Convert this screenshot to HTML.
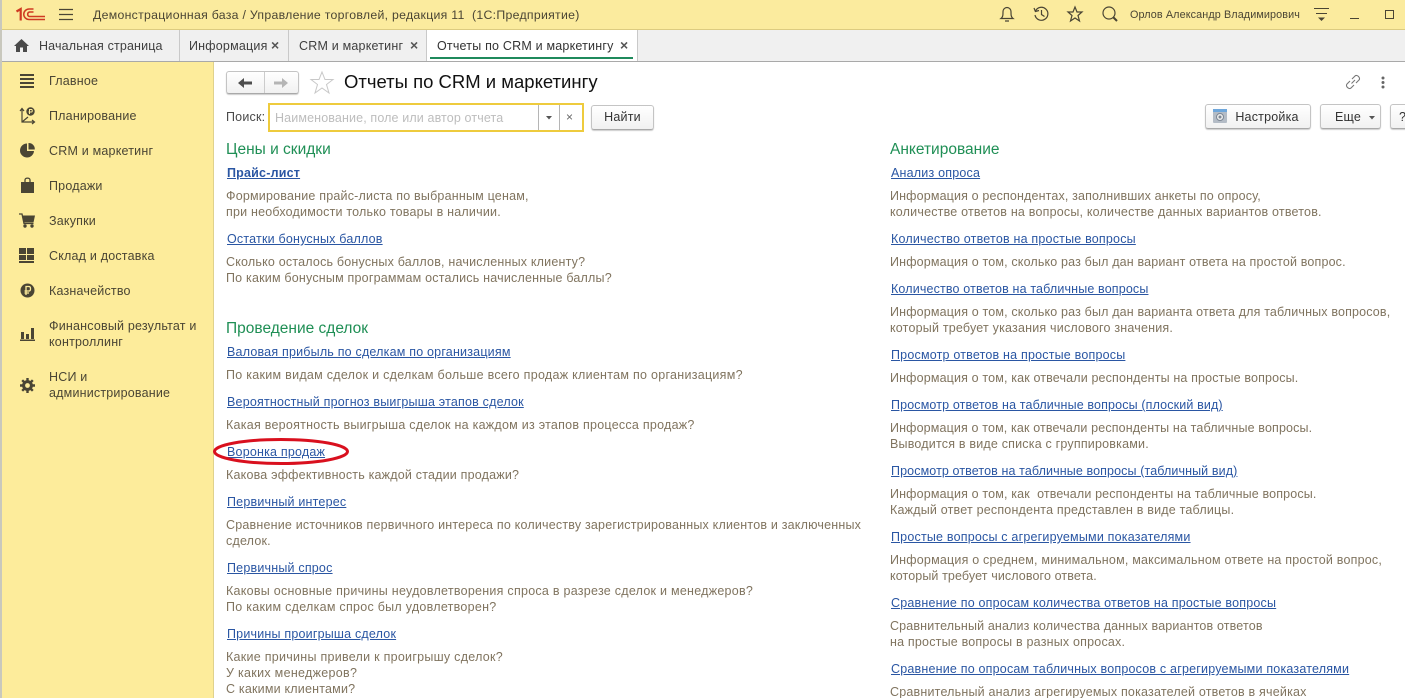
<!DOCTYPE html>
<html lang="ru"><head><meta charset="utf-8"><title>Отчеты по CRM и маркетингу</title>
<style>
html,body{margin:0;padding:0;width:1405px;height:698px;overflow:hidden;background:#fff}
body{position:relative;font-family:"Liberation Sans",Arial,sans-serif;font-size:12.5px;letter-spacing:.2px}
.a{position:absolute;white-space:nowrap;line-height:16px}
.l{position:absolute;white-space:nowrap;line-height:16px;color:#2a56a3;text-decoration:underline;margin-top:1px}
.d{position:absolute;white-space:nowrap;line-height:16px;color:#80745f;margin-top:1px}
.h{position:absolute;white-space:nowrap;line-height:20px;color:#1f8f55;font-size:15.5px;letter-spacing:0;margin-top:1px}
.m{position:absolute;left:49px;white-space:nowrap;line-height:16px;color:#4a4534;margin-top:1px}
.b{position:absolute;box-sizing:border-box;border:1px solid #c4c4c4;border-bottom-color:#a9a9a9;border-radius:3px;background:linear-gradient(#fff,#f1f1f1);box-shadow:0 1px 1px #ccc;color:#333;text-align:center}
.t{position:absolute;top:30px;height:31px;width:1px;background:#c9c9c9}
svg{position:absolute;overflow:visible}
</style></head><body>
<div style="position:absolute;left:0;top:0;width:1405px;height:29px;background:#fbeb9e;border-bottom:1px solid #dccb80"></div>
<div style="position:absolute;left:0;top:30px;width:1405px;height:31px;background:#f0f0f0;border-bottom:1px solid #a9a9a9"></div>
<div style="position:absolute;left:2px;top:62px;width:211px;height:636px;background:#fdec9b;border-right:1px solid #e0d28c"></div>
<div style="position:absolute;left:0;top:0;width:2px;height:698px;background:#c9c8bd"></div>

<svg style="left:16px;top:8px" width="30" height="13" viewBox="0 0 30 13"><path d="M0.500 3.500L4.700 1V12.500" fill="none" stroke="#cf3a22" stroke-width="2.200"/><path d="M17.500 1H13A5.200 5.200 0 0 0 13 11.500H29" fill="none" stroke="#cf3a22" stroke-width="1.500"/><path d="M17.500 4H13.500A2.300 2.300 0 0 0 13.500 8.500H29" fill="none" stroke="#cf3a22" stroke-width="1.500"/></svg>
<svg style="left:59px;top:8px" width="14" height="13"><path d="M0 1.500H14M0 6.500H14M0 11.500H14" stroke="#4a4534" stroke-width="1.200"/></svg>
<div class="a" style="left:93px;top:7px;color:#4a4534;font-size:12.3px;letter-spacing:.28px">Демонстрационная база / Управление торговлей, редакция 11&nbsp; (1С:Предприятие)</div>

<svg style="left:1000px;top:6px" width="14" height="17" viewBox="0 0 14 17"><path d="M1 12.500C3 11 3 9 3 6C3 3 5 1.500 7 1.500S11 3 11 6C11 9 11 11 13 12.500ZM5 15H9" fill="none" stroke="#4a4534" stroke-width="1.200"/></svg>
<svg style="left:1033px;top:6px" width="16" height="16" viewBox="0 0 16 16"><path d="M2.500 5A6.500 6.500 0 1 1 2 9M1 2L2.400 5.500L6 4.500M8.500 4V8.500L11.500 10.500" fill="none" stroke="#4a4534" stroke-width="1.200"/></svg>
<svg style="left:1067px;top:6px" width="16" height="16" viewBox="0 0 16 16"><path d="M8 1L10 6H15L11 9.500L12.500 15L8 12L3.500 15L5 9.500L1 6H6Z" fill="none" stroke="#4a4534" stroke-width="1.200"/></svg>
<svg style="left:1102px;top:6px" width="16" height="16" viewBox="0 0 16 16"><circle cx="7" cy="7" r="6" fill="none" stroke="#4a4534" stroke-width="1.200"/><path d="M11 11L15 15" stroke="#4a4534" stroke-width="2"/></svg>
<div class="a" style="left:1130px;top:7px;color:#4a4534;font-size:10.8px;letter-spacing:.11px">Орлов Александр Владимирович</div>
<svg style="left:1314px;top:8px" width="15" height="14"><path d="M0 .5H15M2 5.500H13" stroke="#4a4534"/><path d="M4 9.500H11L7.500 13Z" fill="#4a4534"/></svg>
<div style="position:absolute;left:1350px;top:18px;width:9px;height:1px;background:#4a4534"></div>
<div style="position:absolute;left:1385px;top:10px;width:7px;height:7px;border:1px solid #4a4534"></div>

<svg style="left:14px;top:39px" width="15" height="13"><path d="M7.500 0L15 7H13V13H9V8.500H6V13H2V7H0Z" fill="#4a4a4a"/></svg>
<div class="a" style="left:39px;top:38px;color:#3f3f3f;letter-spacing:.15px">Начальная страница</div>
<div class="t" style="left:179px"></div>
<div class="a" style="left:189px;top:38px;color:#3f3f3f">Информация</div>
<div class="a" style="left:271px;top:37px;color:#555;font-weight:bold;font-size:14px;letter-spacing:0">×</div>
<div class="t" style="left:288px"></div>
<div class="a" style="left:299px;top:38px;color:#3f3f3f">CRM и маркетинг</div>
<div class="a" style="left:410px;top:37px;color:#555;font-weight:bold;font-size:14px;letter-spacing:0">×</div>
<div class="t" style="left:426px"></div>
<div style="position:absolute;left:427px;top:30px;width:210px;height:31px;background:#fff"></div>
<div class="a" style="left:437px;top:38px;color:#333">Отчеты по CRM и маркетингу</div>
<div class="a" style="left:620px;top:37px;color:#555;font-weight:bold;font-size:14px;letter-spacing:0">×</div>
<div style="position:absolute;left:430px;top:57px;width:203px;height:2px;background:#1f8a5c"></div>
<div class="t" style="left:637px"></div>

<svg style="left:20px;top:74px" width="14" height="14"><path d="M0 1H14M0 5H14M0 9H14M0 13H14" stroke="#4a4534" stroke-width="2"/></svg>
<div class="m" style="top:72px">Главное</div>
<svg style="left:19px;top:107px" width="16" height="17" viewBox="0 0 16 17"><path d="M3 2V15H15M1 4L3 1.500L5 4M13 13L15.500 15L13 17M3 15L9 10" fill="none" stroke="#4a4534" stroke-width="1.200"/><circle cx="11.500" cy="4.500" r="4.200" fill="#4a4534"/><path d="M10.500 7V2.500H12.500C13.500 2.500 13.500 5 12.500 5H9.500" fill="none" stroke="#fdec9b"/></svg>
<div class="m" style="top:107px">Планирование</div>
<svg style="left:20px;top:143px" width="15" height="15" viewBox="0 0 15 15"><path d="M7 .5A7 7 0 1 0 14 8H7Z" fill="#4a4534"/><path d="M8.500 0A6 6 0 0 1 14.800 6.500H8.500Z" fill="#4a4534"/></svg>
<div class="m" style="top:142px">CRM и маркетинг</div>
<svg style="left:21px;top:177px" width="13" height="16" viewBox="0 0 13 16"><path d="M0 5H13V16H0Z" fill="#4a4534"/><path d="M4 7V3C4 .5 9 .5 9 3V7" fill="none" stroke="#4a4534" stroke-width="1.300"/></svg>
<div class="m" style="top:177px">Продажи</div>
<svg style="left:19px;top:213px" width="16" height="15" viewBox="0 0 16 15"><path d="M3 2.500H16L14.500 9.500H5Z" fill="#4a4534"/><path d="M0 1H3L5 10.500H14.500" fill="none" stroke="#4a4534" stroke-width="1.300"/><circle cx="6" cy="13" r="1.700" fill="#4a4534"/><circle cx="13" cy="13" r="1.700" fill="#4a4534"/></svg>
<div class="m" style="top:212px">Закупки</div>
<svg style="left:19px;top:248px" width="15" height="15"><path d="M0 0H7V6H0ZM8 0H15V6H8ZM0 7H7V12H0ZM8 7H15V12H8ZM0 13H15V15H0Z" fill="#4a4534"/></svg>
<div class="m" style="top:247px">Склад и доставка</div>
<svg style="left:20px;top:283px" width="15" height="15"><circle cx="7.500" cy="7.500" r="7" fill="#4a4534"/><path d="M6 12V3.500H9C11 3.500 11 8 9 8H4.500M4.500 10H9" fill="none" stroke="#fdec9b" stroke-width="1.300"/></svg>
<div class="m" style="top:282px">Казначейство</div>
<svg style="left:20px;top:327px" width="15" height="14"><path d="M1 5H4V12H1ZM6 7H9V12H6ZM11 1H14V12H11ZM0 12.500H15V14H0Z" fill="#4a4534"/></svg>
<div class="m" style="top:317px">Финансовый результат и</div>
<div class="m" style="top:333px">контроллинг</div>
<svg style="left:20px;top:378px" width="15" height="15" viewBox="0 0 15 15"><circle cx="7.500" cy="7.500" r="3.900" fill="none" stroke="#4a4534" stroke-width="3"/><path d="M7.500 0V3M7.500 12V15M0 7.500H3M12 7.500H15M2.200 2.200L4.300 4.300M10.700 10.700L12.800 12.800M12.800 2.200L10.700 4.300M4.300 10.700L2.200 12.800" stroke="#4a4534" stroke-width="2.400"/></svg>
<div class="m" style="top:368px">НСИ и</div>
<div class="m" style="top:384px">администрирование</div>

<div class="b" style="left:226px;top:71px;width:73px;height:23px"></div>
<div style="position:absolute;left:264px;top:72px;width:1px;height:21px;background:#ccc"></div>
<svg style="left:238px;top:78px" width="14" height="10"><path d="M0 5L6 0V3.500H14V6.500H6V10Z" fill="#4d4d4d"/></svg>
<svg style="left:274px;top:78px" width="14" height="10"><path d="M14 5L8 0V3.500H0V6.500H8V10Z" fill="#b5b5b5"/></svg>
<svg style="left:310px;top:71px" width="24" height="23" viewBox="0 0 24 23"><path d="M12 1L15 8.500H23L16.500 13.500L19 22L12 17L5 22L7.500 13.500L1 8.500H9Z" fill="none" stroke="#c8c8c8"/></svg>
<div class="a" style="left:344px;top:71px;height:22px;line-height:22px;font-size:18.5px;letter-spacing:0;color:#111">Отчеты по CRM и маркетингу</div>
<svg style="left:1345px;top:74px" width="16" height="16" viewBox="0 0 16 16"><path d="M6.500 9.500L10 6M5 7L2 10C0 12 4 16 6 14L9 11M7 5L10 2C12 0 16 4 14 6L11 9" fill="none" stroke="#777" stroke-width="1.100"/></svg>
<svg style="left:1381px;top:76px" width="4" height="13"><circle cx="2" cy="2" r="1.500" fill="#666"/><circle cx="2" cy="6.500" r="1.500" fill="#666"/><circle cx="2" cy="11" r="1.500" fill="#666"/></svg>

<div class="a" style="left:226px;top:109px;color:#4a4a4a">Поиск:</div>
<div style="position:absolute;box-sizing:border-box;left:268px;top:103px;width:316px;height:29px;border:2px solid #eecb3d;background:#fff"></div>
<div class="a" style="left:275px;top:110px;color:#bdbdbd;letter-spacing:.13px">Наименование, поле или автор отчета</div>
<div style="position:absolute;left:538px;top:105px;width:1px;height:25px;background:#b5b5b5"></div>
<div style="position:absolute;left:559px;top:105px;width:1px;height:25px;background:#b5b5b5"></div>
<svg style="left:546px;top:116px" width="6" height="4"><path d="M0 0H6L3 3.500Z" fill="#555"/></svg>
<div class="a" style="left:566px;top:109px;color:#666;font-size:12px;letter-spacing:0">×</div>
<div class="b" style="left:591px;top:105px;width:63px;height:25px;line-height:23px">Найти</div>
<div class="b" style="left:1205px;top:104px;width:106px;height:25px;line-height:25px;padding-left:18px">Настройка</div>
<svg style="left:1213px;top:109px" width="14" height="14"><rect width="14" height="14" rx="1" fill="#b4bcc6"/><rect width="14" height="3" fill="#6fa7db"/><circle cx="7" cy="8" r="3.500" fill="#eee" stroke="#7c8794"/><circle cx="7" cy="8" r="1.500" fill="#7c8794"/></svg>
<div class="b" style="left:1320px;top:104px;width:61px;height:25px;line-height:25px;padding-right:5px">Еще</div>
<svg style="left:1369px;top:116px" width="6" height="4"><path d="M0 0H6L3 3.500Z" fill="#555"/></svg>
<div class="b" style="left:1390px;top:104px;width:30px;height:25px;line-height:25px;text-align:left;padding-left:8px">?</div>

<div class="h" style="left:226px;top:139px">Цены и скидки</div>
<div class="l" style="left:227px;top:164px;font-weight:bold">Прайс-лист</div>
<div class="d" style="left:226px;top:187px">Формирование прайс-листа по выбранным ценам,</div>
<div class="d" style="left:226px;top:203px">при необходимости только товары в наличии.</div>
<div class="l" style="left:227px;top:230px">Остатки бонусных баллов</div>
<div class="d" style="left:226px;top:253px">Сколько осталось бонусных баллов, начисленных клиенту?</div>
<div class="d" style="left:226px;top:269px">По каким бонусным программам остались начисленные баллы?</div>
<div class="h" style="left:226px;top:318px">Проведение сделок</div>
<div class="l" style="left:227px;top:343px">Валовая прибыль по сделкам по организациям</div>
<div class="d" style="left:226px;top:366px;letter-spacing:.28px">По каким видам сделок и сделкам больше всего продаж клиентам по организациям?</div>
<div class="l" style="left:227px;top:393px">Вероятностный прогноз выигрыша этапов сделок</div>
<div class="d" style="left:226px;top:416px;letter-spacing:.256px">Какая вероятность выигрыша сделок на каждом из этапов процесса продаж?</div>
<div class="l" style="left:227px;top:443px">Воронка продаж</div>
<div class="d" style="left:226px;top:466px">Какова эффективность каждой стадии продажи?</div>
<div class="l" style="left:227px;top:493px">Первичный интерес</div>
<div class="d" style="left:226px;top:516px">Сравнение источников первичного интереса по количеству зарегистрированных клиентов и заключенных</div>
<div class="d" style="left:226px;top:532px">сделок.</div>
<div class="l" style="left:227px;top:559px">Первичный спрос</div>
<div class="d" style="left:226px;top:582px;letter-spacing:.263px">Каковы основные причины неудовлетворения спроса в разрезе сделок и менеджеров?</div>
<div class="d" style="left:226px;top:598px;letter-spacing:.275px">По каким сделкам спрос был удовлетворен?</div>
<div class="l" style="left:227px;top:625px">Причины проигрыша сделок</div>
<div class="d" style="left:226px;top:648px;letter-spacing:.27px">Какие причины привели к проигрышу сделок?</div>
<div class="d" style="left:226px;top:664px;letter-spacing:.3px">У каких менеджеров?</div>
<div class="d" style="left:226px;top:680px">С какими клиентами?</div>

<div class="h" style="left:890px;top:139px">Анкетирование</div>
<div class="l" style="left:891px;top:164px">Анализ опроса</div>
<div class="d" style="left:890px;top:187px;letter-spacing:.15px">Информация о респондентах, заполнивших анкеты по опросу,</div>
<div class="d" style="left:890px;top:203px">количестве ответов на вопросы, количестве данных вариантов ответов.</div>
<div class="l" style="left:891px;top:230px">Количество ответов на простые вопросы</div>
<div class="d" style="left:890px;top:253px;letter-spacing:.16px">Информация о том, сколько раз был дан вариант ответа на простой вопрос.</div>
<div class="l" style="left:891px;top:280px;letter-spacing:.15px">Количество ответов на табличные вопросы</div>
<div class="d" style="left:890px;top:303px;letter-spacing:.16px">Информация о том, сколько раз был дан варианта ответа для табличных вопросов,</div>
<div class="d" style="left:890px;top:319px">который требует указания числового значения.</div>
<div class="l" style="left:891px;top:346px">Просмотр ответов на простые вопросы</div>
<div class="d" style="left:890px;top:369px;letter-spacing:.15px">Информация о том, как отвечали респонденты на простые вопросы.</div>
<div class="l" style="left:891px;top:396px;letter-spacing:.14px">Просмотр ответов на табличные вопросы (плоский вид)</div>
<div class="d" style="left:890px;top:419px;letter-spacing:.14px">Информация о том, как отвечали респонденты на табличные вопросы.</div>
<div class="d" style="left:890px;top:435px">Выводится в виде списка с группировками.</div>
<div class="l" style="left:891px;top:462px;letter-spacing:.11px">Просмотр ответов на табличные вопросы (табличный вид)</div>
<div class="d" style="left:890px;top:485px;letter-spacing:.15px">Информация о том, как&nbsp; отвечали респонденты на табличные вопросы.</div>
<div class="d" style="left:890px;top:501px">Каждый ответ респондента представлен в виде таблицы.</div>
<div class="l" style="left:891px;top:528px">Простые вопросы с агрегируемыми показателями</div>
<div class="d" style="left:890px;top:551px">Информация о среднем, минимальном, максимальном ответе на простой вопрос,</div>
<div class="d" style="left:890px;top:567px;letter-spacing:.11px">который требует числового ответа.</div>
<div class="l" style="left:891px;top:594px">Сравнение по опросам количества ответов на простые вопросы</div>
<div class="d" style="left:890px;top:617px;letter-spacing:.15px">Сравнительный анализ количества данных вариантов ответов</div>
<div class="d" style="left:890px;top:633px">на простые вопросы в разных опросах.</div>
<div class="l" style="left:891px;top:660px">Сравнение по опросам табличных вопросов с агрегируемыми показателями</div>
<div class="d" style="left:890px;top:683px">Сравнительный анализ агрегируемых показателей ответов в ячейках</div>

<svg style="left:212px;top:437px" width="140" height="30"><ellipse cx="69" cy="14.500" rx="66.500" ry="12" fill="none" stroke="#d9101e" stroke-width="3"/></svg>
</body></html>
